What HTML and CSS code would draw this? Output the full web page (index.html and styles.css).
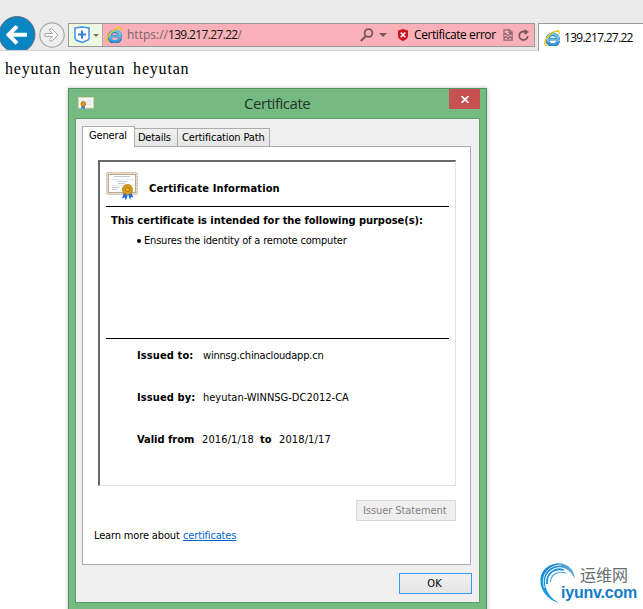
FILE: index.html
```html
<!DOCTYPE html>
<html lang="en">
<head>
<meta charset="utf-8">
<title>139.217.27.22</title>
<link rel="stylesheet" href="styles.css">
</head>
<body>
<svg class="defs" width="0" height="0" aria-hidden="true">
  <defs>
    <linearGradient id="ieBlue" gradientUnits="userSpaceOnUse" x1="0" y1="2" x2="0" y2="15"><stop offset="0" stop-color="#5cc0ee"/><stop offset=".5" stop-color="#7ccbf0"/><stop offset="1" stop-color="#2c8fd2"/></linearGradient>
    <linearGradient id="arcBlue" x1="0" y1="1" x2="1" y2="0"><stop offset="0" stop-color="#12a0ea"/><stop offset=".6" stop-color="#1684cf"/><stop offset="1" stop-color="#7cb6df"/></linearGradient>
    <symbol id="ie" viewBox="0 0 16 16">
      <path d="M14.300 11A5.500 5.500 0 1 1 14.300 8.700" fill="none" stroke="#2578b4" stroke-width="3.600"/>
      <path d="M5 9.200H15.700" stroke="#2578b4" stroke-width="2.600"/>
      <path d="M14 11A5.400 5.400 0 1 1 14.300 8.900" fill="none" stroke="url(#ieBlue)" stroke-width="2.500"/>
      <path d="M4.800 9.200H15" stroke="#62b9e6" stroke-width="1.500"/>
      <path d="M3 15.200C-.5 15.200.5 9.500 5.500 5 10.500.3 15.800-.6 15 3.700" fill="none" stroke="#f2c01d" stroke-width="1.600"/>
    </symbol>
    <symbol id="cert" viewBox="0 0 32 29">
      <rect x=".5" y=".5" width="31" height="22" rx="1" fill="#e5d9c6" stroke="#cfbfaa" stroke-dasharray="2 1"/>
      <rect x="2.500" y="2.500" width="27" height="18" fill="#fcfcfa" stroke="#b8ab96"/>
      <path d="M8 4.500H24M11 9.500H21M12 11.500H19M6 15.500H13M6 17.500H11" stroke="#c0c7da" fill="none"/>
      <path d="M5 7.500H27M5 13.500H27" stroke="#e6e9f0" fill="none"/>
      <path d="M18 20 16 26.500 18.500 25.500 20 28.500 22 22 24 28 25 25 27.500 25.500 25 20Z" fill="#2a6fe6"/>
      <circle cx="21.500" cy="17.500" r="5" fill="#dca01a" stroke="#b17a0a" stroke-width=".8"/>
      <circle cx="21.500" cy="17.500" r="2.200" fill="#e9b12e" stroke="#a6710a" stroke-width=".9"/>
    </symbol>
  </defs>
</svg>

<header class="toolbar">
  <svg class="back" viewBox="0 0 36 34"><circle cx="17" cy="18.500" r="18" fill="#0a85c4" stroke="#65717a"/><path d="M27 18.800H9M17 10.300L8.500 18.800 17 27.300" fill="none" stroke="#fff" stroke-width="4"/></svg>
  <svg class="forward" viewBox="0 0 26 26"><circle cx="13" cy="13" r="12.200" fill="#efefef" stroke="#a7a7a7" stroke-width="1.200"/><path d="M6 11.500H13.500L10.500 8.500V7H13L19 13 13 19H10.500V17.500L13.500 14.500H6Z" fill="#fbfbfb" stroke="#a7a7a7"/></svg>
  <div class="address">
    <div class="shield-box">
      <svg width="16" height="18" viewBox="0 0 16 18"><path d="M8 1 1 2V12Q1 13 2 14L8 16.500 14 14Q15 13 15 12V2Z" fill="#fff" stroke="#4391ee" stroke-width="1.500"/><path d="M8 4.500V12.500M4 8.500H12" stroke="#2f7fdb" stroke-width="2"/></svg>
      <i class="caret small"></i>
    </div>
    <svg class="ie" viewBox="0 0 16 16"><use href="#ie"/></svg>
    <span class="url">https://<b>139.217.27.22</b>/</span>
    <svg class="search" viewBox="0 0 14 14"><circle cx="8.500" cy="5" r="3.900" fill="none" stroke="#79555a" stroke-width="1.800"/><path d="M6 8 .8 13" stroke="#79555a" stroke-width="2"/></svg>
    <i class="caret"></i>
    <svg class="error-icon" viewBox="0 0 10 12"><path d="M5 0 10 1.500V7Q10 10 5 12 0 10 0 7V1.500Z" fill="#cb171e"/><path d="M2.700 3.500 7.300 8.200M7.300 3.500 2.700 8.200" stroke="#fff" stroke-width="1.500"/></svg>
    <span class="cert-error">Certificate error</span>
    <svg class="compat" viewBox="0 0 10 12"><path d="M1 5V.8H6.500L9.200 3V5M6 1V3.500H9M1 7V11.200H9.200V7M0 6.500 2.500 4.500 5 6.500 7.500 4.500 10 6.500M1 9.500 3 7.500 5 9.500 7 7.500 9 9.500" fill="none" stroke="#8d656b" stroke-width="1.200"/></svg>
    <svg class="refresh" viewBox="0 0 12 12"><path d="M7.500 2.500H5.500A4.200 4.200 0 1 0 9.700 7" fill="none" stroke="#79555a" stroke-width="1.800"/><path d="M6.500 0 11 3 6.500 6Z" fill="#79555a"/></svg>
  </div>
  <div class="tab">
    <svg class="ie" viewBox="0 0 16 16"><use href="#ie"/></svg>
    <span class="tab-title">139.217.27.22</span>
  </div>
</header>

<main class="page">heyutan heyutan heyutan</main>

<section class="dialog">
  <div class="titlebar">
    <svg class="title-icon" viewBox="0 0 16 13"><rect x=".5" y=".5" width="15" height="10.500" fill="#f8f6f3" stroke="#e4cfae"/><path d="M3 3.500H13M8 5.500H13M8 7.500H13" stroke="#e3e5e9"/><path d="M4 8 3 12.500 5 11 7 12.500 6.500 8Z" fill="#2d75cf"/><circle cx="5.300" cy="7" r="2.400" fill="#d59a16" stroke="#9d6908" stroke-width=".7"/></svg>
    <span class="title">Certificate</span>
    <div class="close"><svg width="8" height="7" viewBox="0 0 8 7"><path d="M.5 0 7.500 7M7.500 0 .5 7" stroke="#fff" stroke-width="1.700"/></svg></div>
  </div>
  <div class="client">
    <nav class="tabs">
      <div class="t active"><span>General</span></div>
      <div class="t details"><span>Details</span></div>
      <div class="t path"><span>Certification Path</span></div>
    </nav>
    <div class="panel">
      <div class="info">
        <div class="heading">
          <svg class="cert-icon" viewBox="0 0 32 29"><use href="#cert"/></svg>
          <strong class="h-text">Certificate Information</strong>
        </div>
        <div class="purposes">
          <strong class="p-title">This certificate is intended for the following purpose(s):</strong>
          <div class="purpose"><i class="dot"></i><span>Ensures the identity of a remote computer</span></div>
        </div>
        <div class="facts">
          <div class="fact"><strong class="k to">Issued to:</strong><span class="v1">winnsg.chinacloudapp.cn</span></div>
          <div class="fact"><strong class="k by">Issued by:</strong><span class="v2">heyutan-WINNSG-DC2012-CA</span></div>
          <div class="fact"><strong class="k from">Valid from</strong><span class="v3">2016/1/18</span><strong class="until">to</strong><span class="v4">2018/1/17</span></div>
        </div>
      </div>
      <div class="issuer"><span>Issuer Statement</span></div>
      <div class="learn"><span class="lm">Learn more about</span><a>certificates</a></div>
    </div>
    <div class="ok"><span>OK</span></div>
  </div>
</section>

<div class="brand">
  <svg class="swirl" viewBox="0 0 38 42"><path d="M20 41C-1 35-5 10 12 3 24-2 35 5 36 17 31 6 20 2 12 8 1 16 6 34 20 41Z" fill="url(#arcBlue)"/><path d="M5.500 26C1 13 10 3 22 3" stroke="#fff" stroke-width=".8" fill="none"/><path d="M8 22C7 12 15 5 25 8" stroke="#1c92d9" stroke-width="1.800" fill="none"/><path d="M11.500 20C11.500 13 18 8.500 27 11" stroke="#48a8e0" stroke-width="1.200" fill="none"/></svg>
  <div class="brand-text"><span class="cn">运维网</span><span class="domain">iyunv.com</span></div>
</div>
</body>
</html>
```
FILE: styles.css
```css
* { box-sizing: border-box; }
body { margin: 0; width: 643px; height: 609px; overflow: hidden; background: #fff; color: #000; font: 12px/16px "Open Sans", "Noto Sans", sans-serif; position: relative; }
svg { display: block; flex: none; }
span, strong, a { white-space: nowrap; }
.defs { position: absolute; }

.toolbar { display: flex; height: 51px; background: #eaeaea; border-bottom: 1px solid #d3d3d3; }
.back { width: 36px; height: 34px; margin-top: 16px; }
.forward { width: 26px; height: 26px; margin: 22px 0 0 3px; }
.address { display: flex; align-items: center; width: 467px; height: 24px; margin: 23px 0 0 3px; background: #f9b0b9; border: 1px solid #999; }
.shield-box { display: flex; align-items: center; width: 34px; height: 22px; padding-left: 5px; background: #eef7df; border: solid #666; border-width: 0 1px 0 0; border-right-color: #aaa; }
.caret { flex: none; border: 4px solid transparent; border-top-color: #79555a; border-bottom: 0; margin-left: 5px; }
.caret.small { border-width: 3px 3px 0; border-top-color: #777; margin-left: 3px; }
.ie { width: 16px; height: 16px; }
.address .ie { margin-left: 3px; }
.url { width: 120px; margin-left: 5px; color: #7d646a; }
.url b { font-weight: 400; color: #111; letter-spacing: -.65px; }
.search { width: 14px; height: 14px; margin-left: 113px; }
.error-icon { width: 10px; height: 12px; margin-left: 11px; }
.cert-error { width: 84px; margin-left: 6px; letter-spacing: -.42px; }
.compat { width: 10px; height: 12px; margin-left: 5px; }
.refresh { width: 12px; height: 12px; margin-left: 5px; }
.tab { display: flex; align-items: center; width: 105px; height: 28px; margin: 23px 0 0 3px; padding-left: 5px; background: #fff; border: solid #999; border-width: 1px 0 0 1px; }
.tab-title { margin-left: 4px; letter-spacing: -.72px; }

.page { padding: 9px 5px; font: 16px/18px "Liberation Serif", serif; letter-spacing: .8px; word-spacing: 3px; }

.dialog { position: absolute; left: 68px; top: 88px; width: 419px; height: 530px; padding: 0 6px; background: #75ba80; border: 1px solid #539361; box-shadow: 0 0 4px #bbb; font: 11px/14px "DejaVu Sans Condensed", "DejaVu Sans", sans-serif; }
.titlebar { display: flex; height: 29px; }
.title-icon { width: 16px; height: 13px; margin: 8px 0 0 3px; }
.title { width: 68px; margin: 4px 0 0 150px; font: 15px/20px "Open Sans", sans-serif; color: #23372a; letter-spacing: -.45px; }
.close { display: flex; align-items: center; justify-content: center; width: 31px; height: 20px; margin-left: 137px; background: #c75050; }
.client { width: 405px; height: 485px; padding: 7px 0 0 6px; background: #efefef; border: 1px solid #5b9e68; }
.tabs { display: flex; align-items: flex-end; height: 20px; letter-spacing: -.15px; }
.t { height: 18px; padding-top: 2px; background: linear-gradient(#f0f0f0, #e5e5e5); border: 1px solid #acacac; border-bottom: 0; border-left: 0; }
.t.active { position: relative; width: 53px; height: 21px; padding: 2px 0 0 6px; margin-bottom: -1px; background: #fff; border-left: 1px solid #acacac; }
.details { width: 43px; padding-left: 3px; letter-spacing: -.25px; }
.path { width: 92px; padding-left: 4px; }
.panel { width: 389px; height: 419px; padding: 13px 14px 0 15px; background: #fff; border: 1px solid #acacac; }
.info { width: 358px; height: 326px; padding: 0 6px; border: 2px solid #696969; border-width: 2px 1px 1px 2px; border-right-color: #e1e1e1; border-bottom-color: #e1e1e1; }
.heading { display: flex; height: 45px; border-bottom: 1px solid #000; }
.cert-icon { width: 32px; height: 29px; margin-top: 10px; }
.h-text { margin: 20px 0 0 11px; letter-spacing: .13px; }
.purposes { height: 132px; padding: 7px 0 0 5px; border-bottom: 1px solid #000; }
.p-title { display: block; letter-spacing: -.03px; }
.purpose { display: flex; align-items: center; margin: 6px 0 0 26px; letter-spacing: -.2px; }
.dot { width: 4px; height: 4px; margin-right: 3px; border-radius: 50%; background: #000; }
.facts { padding: 10px 0 0 31px; }
.fact { display: flex; height: 42px; }
.k { width: 66px; letter-spacing: .12px; }
.from { width: 65px; letter-spacing: 0; }
.v1 { letter-spacing: -.2px; }
.v3 { width: 58px; }
.v3, .v4 { letter-spacing: .12px; }
.until { width: 19px; }
.issuer { width: 100px; height: 21px; margin: 14px 0 0 258px; padding: 3px 0 0 6px; background: #efefef; border: 1px solid #d9d9d9; color: #838383; letter-spacing: -.08px; }
.learn { display: flex; margin: 8px 0 0 -4px; letter-spacing: -.15px; }
.lm { width: 89px; }
.learn a { color: #0066cc; text-decoration: underline; }
.ok { width: 73px; height: 21px; margin: 8px 0 0 317px; padding: 3px 2px 0 0; text-align: center; background: linear-gradient(#f0f0f0, #e5e5e5); border: 1px solid #3399ff; }

.brand { position: absolute; left: 539px; top: 562px; display: flex; }
.swirl { width: 38px; height: 42px; }
.brand-text { display: flex; flex-direction: column; margin-left: -16px; }
.cn { margin: 4px 0 0 19px; font: 16px/17px "Noto Sans CJK SC", sans-serif; color: #666b70; }
.domain { margin-top: 2px; font: bold 16px/16px "Liberation Sans", sans-serif; letter-spacing: -.2px; color: #137bc8; }
```
